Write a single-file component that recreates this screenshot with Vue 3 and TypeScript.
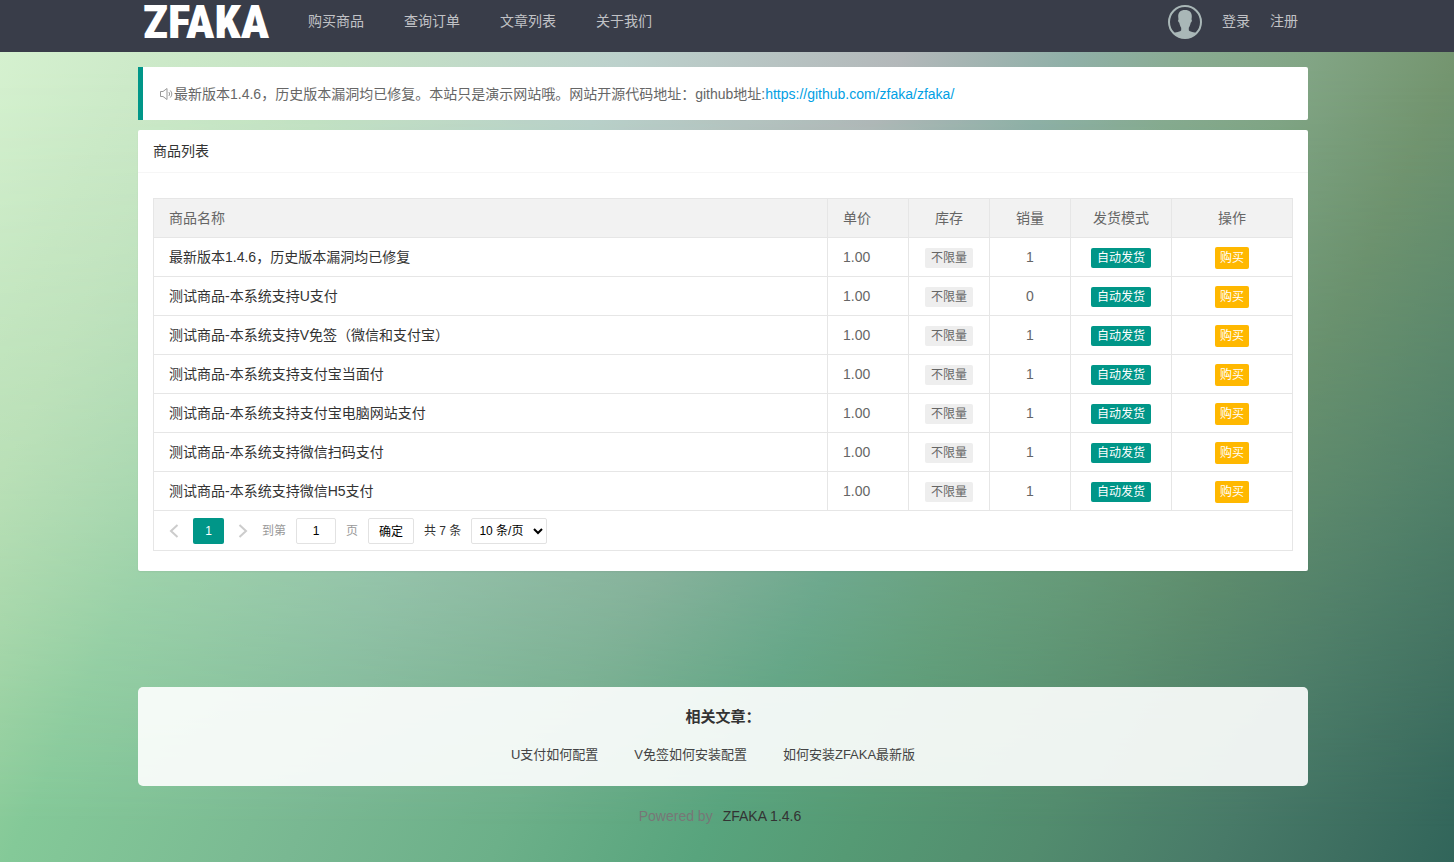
<script setup lang="ts">
import { ref } from 'vue'

interface Product {
  name: string
  price: string
  stock: string
  sales: number
  mode: string
}

const navItems: string[] = ['购买商品', '查询订单', '文章列表', '关于我们']

const names: string[] = [
  '最新版本1.4.6，历史版本漏洞均已修复',
  '测试商品-本系统支持U支付',
  '测试商品-本系统支持V免签（微信和支付宝）',
  '测试商品-本系统支持支付宝当面付',
  '测试商品-本系统支持支付宝电脑网站支付',
  '测试商品-本系统支持微信扫码支付',
  '测试商品-本系统支持微信H5支付',
]

const products: Product[] = names.map((name, index) => ({
  name,
  price: '1.00',
  stock: '不限量',
  sales: index === 1 ? 0 : 1,
  mode: '自动发货',
}))

const articles: string[] = ['U支付如何配置', 'V免签如何安装配置', '如何安装ZFAKA最新版']

const page = ref('1')
const pageSize = ref('10')
</script>

<template>
  <div class="page">
    <header class="header">
      <div class="container header-inner">
        <a class="logo" href="#">ZFAKA</a>
        <nav class="nav">
          <a v-for="item in navItems" :key="item" href="#">{{ item }}</a>
        </nav>
        <div class="user">
          <svg class="avatar" viewBox="0 0 34 34" aria-hidden="true">
            <circle cx="17" cy="17" r="16" fill="none" stroke="#a9b7b7" stroke-width="2" />
            <path
              d="M17 5c-4.600 0-7 2.500-6.800 6.800.1 1.100.2 2 .3 2.800-.8.3-.4 2.700.8 3.200.4 2.200 1 3.700 1.900 4.900v2.600c-.4 1.700-5.700 1.700-8.200 3C8.200 31.800 12.400 33 17 33s8.800-1.200 12-4.700c-2.500-1.300-7.800-1.300-8.200-3v-2.600c.9-1.200 1.500-2.700 1.900-4.900 1.200-.5 1.600-2.900.8-3.200.1-.8.2-1.700.3-2.800C24 7.500 21.600 5 17 5z"
              fill="#a9b7b7"
            />
          </svg>
          <a href="#">登录</a>
          <a href="#">注册</a>
        </div>
      </div>
    </header>

    <main class="container main">
      <section class="notice">
        <svg class="speaker" viewBox="0 0 14 14" aria-hidden="true">
          <path d="M1.500 4.500h2.500L8 1.500v11L4 9.500H1.500zM9.800 5c1 1 1 3 0 4M11.300 3.500c2 2 2 5 0 7" />
        </svg>
        <p>
          最新版本1.4.6，历史版本漏洞均已修复。本站只是演示网站哦。网站开源代码地址：github地址:<a href="https://github.com/zfaka/zfaka/">https://github.com/zfaka/zfaka/</a>
        </p>
      </section>

      <section class="card">
        <h2 class="card-title">商品列表</h2>
        <div class="card-body">
          <table class="table">
            <colgroup>
              <col />
              <col class="col-small" />
              <col class="col-small" />
              <col class="col-small" />
              <col class="col-mode" />
              <col class="col-action" />
            </colgroup>
            <thead>
              <tr>
                <th class="left">商品名称</th>
                <th class="left">单价</th>
                <th>库存</th>
                <th>销量</th>
                <th>发货模式</th>
                <th>操作</th>
              </tr>
            </thead>
            <tbody>
              <tr v-for="product in products" :key="product.name">
                <td class="left"><a class="product" href="#">{{ product.name }}</a></td>
                <td class="left">{{ product.price }}</td>
                <td><span class="badge">{{ product.stock }}</span></td>
                <td>{{ product.sales }}</td>
                <td><span class="badge badge-green">{{ product.mode }}</span></td>
                <td><button class="buy" type="button">购买</button></td>
              </tr>
            </tbody>
          </table>
          <div class="pager">
            <button class="arrow" type="button" aria-label="上一页">
              <svg viewBox="0 0 12 14" aria-hidden="true"><path d="M9.500 1L3 7l6.500 6" /></svg>
            </button>
            <span class="current">1</span>
            <button class="arrow" type="button" aria-label="下一页">
              <svg viewBox="0 0 12 14" aria-hidden="true"><path d="M2.500 1L9 7l-6.500 6" /></svg>
            </button>
            <label class="muted" for="page-input">到第</label>
            <input id="page-input" v-model="page" class="page-input" type="text" />
            <span class="muted">页</span>
            <button class="confirm" type="button">确定</button>
            <span>共 7 条</span>
            <select v-model="pageSize" class="page-size" aria-label="每页条数">
              <option value="10">10 条/页</option>
              <option value="20">20 条/页</option>
            </select>
          </div>
        </div>
      </section>

      <section class="articles">
        <h3>相关文章：</h3>
        <div class="article-links">
          <a v-for="article in articles" :key="article" href="#">{{ article }}</a>
        </div>
      </section>
    </main>

    <footer class="footer">
      <span>Powered by</span>
      <a href="#">ZFAKA 1.4.6</a>
    </footer>
  </div>
</template>

<style>
body {
  margin: 0;
}
</style>

<style scoped>
.page {
  position: relative;
  isolation: isolate;
  box-sizing: border-box;
  min-height: 100vh;
  font-family: 'Liberation Sans', 'Noto Sans CJK SC', sans-serif;
  font-size: 14px;
  line-height: 22px;
  color: #666;
  background: linear-gradient(115deg, #b0dcad 0%, #a4d6a2 12%, #84c998 22%, #79b892 37%, #6cb089 48%, #58a47d 59%, #559a74 67%, #528c6e 77%, #487a68 87%, #3d6e60 94%, #31655a 100%);
}
.page::before {
  content: '';
  position: absolute;
  inset: 0;
  z-index: -1;
  background: linear-gradient(115deg, #d6f2d0 0%, #cdeac9 9%, #c5e2c5 20%, #bcd1cc 35%, #b3b8ba 50%, #90b0a8 59%, #88ab90 66%, #82a585 72%, #74956f 80%, #5d8a6c 90%, #4d7b65 100%);
  mask-image: linear-gradient(#000 8%, rgba(0, 0, 0, 0.55) 55%, rgba(0, 0, 0, 0.3) 74%, transparent 96%);
}
a {
  color: #333;
  text-decoration: none;
}
button,
input,
select {
  box-sizing: border-box;
  margin: 0;
  font-family: inherit;
}
.container {
  box-sizing: border-box;
  width: 1170px;
  max-width: 100%;
  margin: 0 auto;
}
.header,
.main,
.footer {
  padding-right: 8px;
}
.header {
  background: #393d49;
}
.header-inner {
  display: flex;
  align-items: flex-start;
  height: 52px;
}
.logo {
  width: 150px;
  padding-left: 5px;
  box-sizing: border-box;
  font-family: 'Roboto Condensed', 'Open Sans Condensed', 'Noto Sans CJK SC', sans-serif;
  font-size: 47px;
  font-weight: 900;
  line-height: 44px;
  color: #fff;
}
.nav {
  display: flex;
  line-height: 42px;
}
.nav a {
  padding: 0 20px;
}
.nav a,
.user a {
  color: rgba(255, 255, 255, 0.7);
}
.user {
  display: flex;
  gap: 20px;
  margin-left: auto;
  padding-right: 10px;
  line-height: 42px;
}
.avatar {
  width: 34px;
  height: 34px;
  margin-top: 5px;
}
.main {
  box-sizing: content-box;
  padding-top: 15px;
}
.notice {
  display: flex;
  align-items: center;
  padding: 16px 16px 14px;
  border-left: 5px solid #009688;
  border-radius: 0 2px 2px 0;
  background: #fff;
  line-height: 23px;
}
.notice p {
  margin: 0;
}
.notice a {
  color: #01a0e4;
}
.speaker {
  width: 14px;
  height: 14px;
  flex: none;
  margin-right: 1px;
  margin-bottom: 2px;
  fill: none;
  stroke: #999;
}
.card {
  margin-top: 10px;
  border-radius: 2px;
  background: #fff;
  box-shadow: 0 1px 2px rgba(0, 0, 0, 0.05);
}
.card-title {
  margin: 0;
  padding: 0 15px;
  border-bottom: 1px solid #f6f6f6;
  font-size: 14px;
  font-weight: 400;
  line-height: 42px;
  color: #333;
}
.card-body {
  padding: 25px 15px 20px;
}
.table {
  width: 100%;
  border-collapse: collapse;
  table-layout: fixed;
}
.col-small {
  width: 81px;
}
.col-mode {
  width: 101px;
}
.col-action {
  width: 121px;
}
th,
td {
  height: 38px;
  padding: 0;
  border: 1px solid #e6e6e6;
  font-weight: 400;
  text-align: center;
}
th {
  background: #f2f2f2;
}
.left {
  padding-left: 15px;
  text-align: left;
}
.badge {
  display: inline-block;
  padding: 0 6px;
  border-radius: 2px;
  background: #eee;
  font-size: 12px;
  line-height: 20px;
  vertical-align: middle;
}
.badge-green {
  background: #009688;
  color: #fff;
}
.buy {
  height: 22px;
  padding: 0 5px;
  border: 0;
  border-radius: 2px;
  background: #ffb800;
  color: #fff;
  font-size: 12px;
  line-height: 22px;
  vertical-align: middle;
}
.pager {
  display: flex;
  align-items: center;
  gap: 10px;
  height: 39px;
  padding-left: 11px;
  border: 1px solid #e6e6e6;
  border-top: 0;
  font-size: 12px;
  color: #333;
}
.arrow {
  width: 18px;
  height: 26px;
  padding: 0 3px;
  border: 0;
  background: none;
}
.arrow svg {
  display: block;
  width: 12px;
  height: 14px;
  fill: none;
  stroke: #ccc;
  stroke-width: 2;
}
.current {
  width: 31px;
  border-radius: 2px;
  background: #009688;
  color: #fff;
  line-height: 26px;
  text-align: center;
}
.muted {
  color: #999;
}
.page-input,
.confirm,
.page-size {
  height: 26px;
  border: 1px solid #e2e2e2;
  border-radius: 2px;
  background: #fff;
  color: #000;
  font-size: 12px;
}
.page-input {
  width: 40px;
  padding: 0;
  text-align: center;
}
.confirm {
  width: 46px;
  padding: 0;
}
.page-size {
  width: 76px;
  padding: 0 3px;
}
.articles {
  margin-top: 116px;
  padding: 19px 0 20px;
  border-radius: 5px;
  background: rgba(255, 255, 255, 0.9);
  text-align: center;
}
.articles h3 {
  margin: 0;
  font-size: 15px;
  line-height: 22px;
  color: #333;
}
.article-links {
  display: flex;
  justify-content: center;
  gap: 36px;
  margin-top: 16px;
  padding-right: 20px;
  font-size: 13px;
}
.article-links a {
  color: #444;
}
.footer {
  display: flex;
  justify-content: center;
  gap: 10px;
  padding-top: 19px;
  padding-right: 14px;
  padding-bottom: 35px;
  color: #777;
}
</style>
